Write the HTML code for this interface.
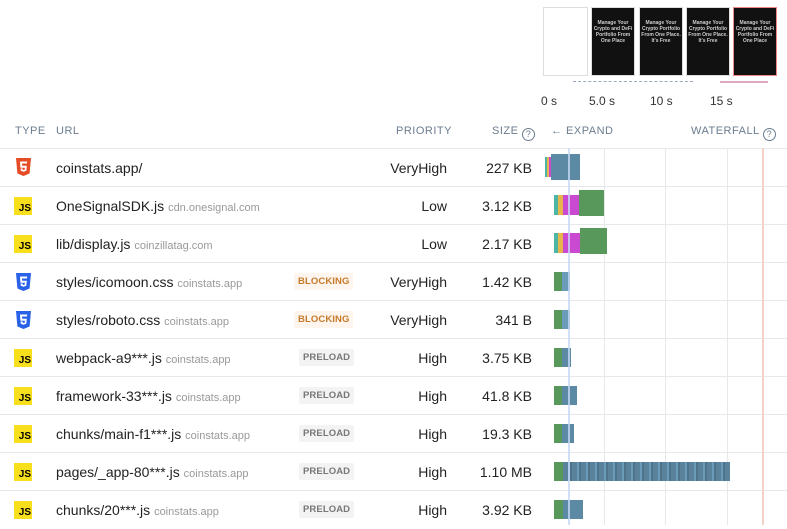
<!DOCTYPE html><html><head><style>
body{margin:0;width:787px;height:525px;overflow:hidden;background:#fff;font-family:"Liberation Sans",sans-serif;position:relative}
.a{position:absolute}
.h{font-size:11px;color:#6b7c8f;letter-spacing:.5px;top:125px}
.row{position:absolute;left:0;width:787px;height:38px;border-top:1px solid #e6e8eb}
.url{position:absolute;left:56px;top:11px;font-size:14px;color:#222;white-space:nowrap}
.url span{font-size:11px;color:#999}
.pr{position:absolute;right:340px;top:11px;font-size:14px;color:#222}
.sz{position:absolute;right:255px;top:11px;font-size:14px;color:#222}
.js{position:absolute;left:14px;top:10px;width:18px;height:18px;background:#f7df1e;font:bold 10px "Liberation Sans",sans-serif;color:#000;text-align:right;line-height:24px;padding-right:1px;box-sizing:border-box}
.bd{position:absolute;top:10px;font-size:9.5px;font-weight:bold;letter-spacing:.1px;padding:3px 4px;border-radius:2px}
.bl{left:294px;background:#fdf5ee;color:#c87a2a}
.pl{left:299px;background:#f3f3f3;color:#777}
.b{position:absolute;top:8px;height:20px}
.f{position:absolute;top:7px;width:44px;height:69px;background:#111;border:1px solid #ddd;box-sizing:border-box;font:bold 5px sans-serif;color:#ccc;text-align:center;padding-top:12px}
.vl{position:absolute;top:148px;width:1px;height:377px;background:#e8e8e8}
</style></head><body>
<div class="a" style="left:543px;top:7px;width:45px;height:69px;border:1px solid #ddd;box-sizing:border-box"></div>
<div class="f" style="left:591px">Manage Your Crypto and DeFi Portfolio From One Place</div>
<div class="f" style="left:639px">Manage Your Crypto Portfolio From One Place. It's Free</div>
<div class="f" style="left:686px">Manage Your Crypto Portfolio From One Place. It's Free</div>
<div class="f" style="left:733px;border:1px solid #e88">Manage Your Crypto and DeFi Portfolio From One Place</div>
<div class="a" style="left:573px;top:81px;width:120px;height:1px;border-top:1px dashed #9ab"></div>
<div class="a" style="left:720px;top:81px;width:48px;height:2px;background:#d9a9c4"></div>
<div class="a" style="left:541px;top:94px;font-size:12px;color:#333">0 s</div>
<div class="a" style="left:589px;top:94px;font-size:12px;color:#333">5.0 s</div>
<div class="a" style="left:650px;top:94px;font-size:12px;color:#333">10 s</div>
<div class="a" style="left:710px;top:94px;font-size:12px;color:#333">15 s</div>
<div class="a h" style="left:15px">TYPE</div><div class="a h" style="left:56px">URL</div>
<div class="a h" style="left:396px">PRIORITY</div><div class="a h" style="left:492px">SIZE <span style="display:inline-block;width:11px;height:11px;border:1.5px solid #6b7c8f;border-radius:50%;font-size:9px;text-align:center;line-height:11px;vertical-align:-3px">?</span></div>
<div class="a h" style="left:551px;font-size:11px">← EXPAND</div>
<div class="a h" style="left:691px">WATERFALL <span style="display:inline-block;width:11px;height:11px;border:1.5px solid #6b7c8f;border-radius:50%;font-size:9px;text-align:center;line-height:11px;vertical-align:-3px">?</span></div>
<div class="vl" style="left:604px"></div><div class="vl" style="left:665px"></div><div class="vl" style="left:727px"></div>
<div class="row" style="top:148px"><svg class="a" style="left:16px;top:9px" width="15" height="18" viewBox="0 0 15 18"><path d="M0 0h15l-1.4 15.5L7.5 18 1.4 15.5z" fill="#e44d26"/><path d="M4 3.5h7.2l-.2 2H6l.2 2.3h4.6l-.5 5L7.5 13.8 4.8 12.8l-.2-2.3h2l.1 1.1 1 .4 1-.4.2-1.9H4.4z" fill="#fff"/></svg><div class="url">coinstats.app/</div><div class="pr">VeryHigh</div><div class="sz">227 KB</div>
<div class="b" style="left:545px;width:2px;background:#4cb5a5"></div><div class="b" style="left:547px;width:2px;background:#e7b54d"></div><div class="b" style="left:549px;width:2px;background:#c94ad0"></div><div class="b" style="left:551px;top:5px;height:26px;width:29px;background:#5c8aa5"></div></div>
<div class="row" style="top:186px"><div class="js">JS</div><div class="url">OneSignalSDK.js <span>cdn.onesignal.com</span></div><div class="pr">Low</div><div class="sz">3.12 KB</div>
<div class="b" style="left:554px;width:4px;background:#4cb5a5"></div><div class="b" style="left:558px;width:5px;background:#e7b54d"></div><div class="b" style="left:563px;width:16px;background:#c94ad0"></div><div class="b" style="left:579px;top:3px;height:26px;width:25px;background:#58985a"></div></div>
<div class="row" style="top:224px"><div class="js">JS</div><div class="url">lib/display.js <span>coinzillatag.com</span></div><div class="pr">Low</div><div class="sz">2.17 KB</div>
<div class="b" style="left:554px;width:4px;background:#4cb5a5"></div><div class="b" style="left:558px;width:5px;background:#e7b54d"></div><div class="b" style="left:563px;width:17px;background:#c94ad0"></div><div class="b" style="left:580px;top:3px;height:26px;width:27px;background:#58985a"></div></div>
<div class="row" style="top:262px"><svg class="a" style="left:16px;top:10px" width="15" height="18" viewBox="0 0 15 18"><path d="M0 0h15l-1.4 15.5L7.5 18 1.4 15.5z" fill="#2962e8"/><path d="M4 3.5h7.2l-.2 2H6l.2 2.3h4.6l-.5 5L7.5 13.8 4.8 12.8l-.2-2.3h2l.1 1.1 1 .4 1-.4.2-1.9H4.4z" fill="#fff"/></svg><div class="url">styles/icomoon.css <span>coinstats.app</span></div><div class="bd bl">BLOCKING</div><div class="pr">VeryHigh</div><div class="sz">1.42 KB</div>
<div class="b" style="left:554px;top:9px;height:19px;width:8px;background:#58985a"></div><div class="b" style="left:562px;top:9px;height:19px;width:8px;background:#6a9bb8"></div></div>
<div class="row" style="top:300px"><svg class="a" style="left:16px;top:10px" width="15" height="18" viewBox="0 0 15 18"><path d="M0 0h15l-1.4 15.5L7.5 18 1.4 15.5z" fill="#2962e8"/><path d="M4 3.5h7.2l-.2 2H6l.2 2.3h4.6l-.5 5L7.5 13.8 4.8 12.8l-.2-2.3h2l.1 1.1 1 .4 1-.4.2-1.9H4.4z" fill="#fff"/></svg><div class="url">styles/roboto.css <span>coinstats.app</span></div><div class="bd bl">BLOCKING</div><div class="pr">VeryHigh</div><div class="sz">341 B</div>
<div class="b" style="left:554px;top:9px;height:19px;width:8px;background:#58985a"></div><div class="b" style="left:562px;top:9px;height:19px;width:8px;background:#6a9bb8"></div></div>
<div class="row" style="top:338px"><div class="js">JS</div><div class="url">webpack-a9***.js <span>coinstats.app</span></div><div class="bd pl">PRELOAD</div><div class="pr">High</div><div class="sz">3.75 KB</div>
<div class="b" style="left:554px;top:9px;height:19px;width:8px;background:#58985a"></div><div class="b" style="left:562px;top:9px;height:19px;width:9px;background:#5c8aa5"></div></div>
<div class="row" style="top:376px"><div class="js">JS</div><div class="url">framework-33***.js <span>coinstats.app</span></div><div class="bd pl">PRELOAD</div><div class="pr">High</div><div class="sz">41.8 KB</div>
<div class="b" style="left:554px;top:9px;height:19px;width:8px;background:#58985a"></div><div class="b" style="left:562px;top:9px;height:19px;width:15px;background:#5c8aa5"></div></div>
<div class="row" style="top:414px"><div class="js">JS</div><div class="url">chunks/main-f1***.js <span>coinstats.app</span></div><div class="bd pl">PRELOAD</div><div class="pr">High</div><div class="sz">19.3 KB</div>
<div class="b" style="left:554px;top:9px;height:19px;width:8px;background:#58985a"></div><div class="b" style="left:562px;top:9px;height:19px;width:12px;background:#5c8aa5"></div></div>
<div class="row" style="top:452px"><div class="js">JS</div><div class="url">pages/_app-80***.js <span>coinstats.app</span></div><div class="bd pl">PRELOAD</div><div class="pr">High</div><div class="sz">1.10 MB</div>
<div class="b" style="left:554px;top:9px;height:19px;width:9px;background:#58985a"></div><div class="b" style="left:563px;top:9px;height:19px;width:167px;background:repeating-linear-gradient(90deg,#5a829a 0 5px,#6a9bb8 5px 7px,#4f7389 7px 9px)"></div></div>
<div class="row" style="top:490px"><div class="js">JS</div><div class="url">chunks/20***.js <span>coinstats.app</span></div><div class="bd pl">PRELOAD</div><div class="pr">High</div><div class="sz">3.92 KB</div>
<div class="b" style="left:554px;top:9px;height:19px;width:9px;background:#58985a"></div><div class="b" style="left:563px;top:9px;height:19px;width:20px;background:#5c8aa5"></div></div>
<div class="a" style="left:568px;top:148px;width:2px;height:377px;background:#c5d8f5;opacity:.8"></div>
<div class="a" style="left:762px;top:148px;width:2px;height:377px;background:#f3d3c8"></div>
</body></html>
